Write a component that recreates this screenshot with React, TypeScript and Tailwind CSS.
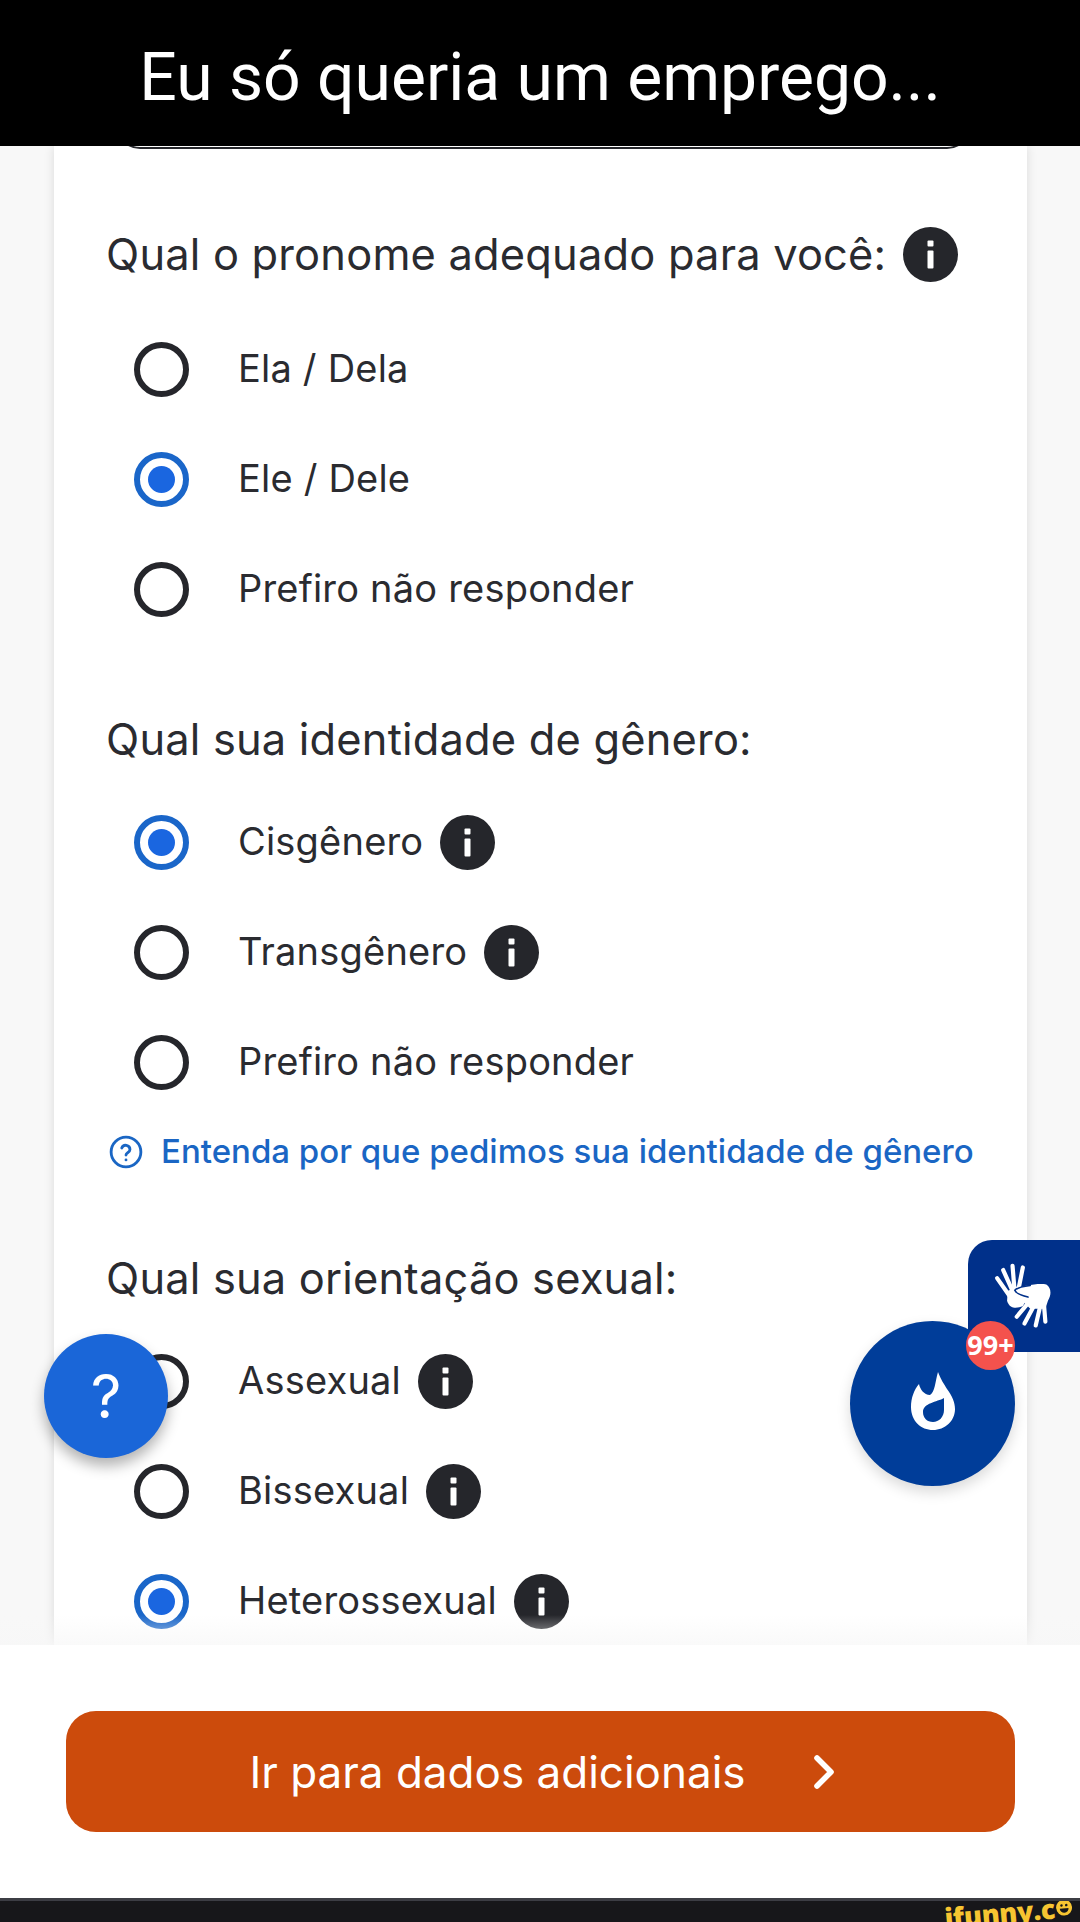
import React from 'react';
import { ChevronRight } from 'lucide-react';

function InfoIcon() {
  return (
    <svg width="55" height="55" viewBox="0 0 55 55" className="shrink-0">
      <circle cx="27.5" cy="27.5" r="27.5" fill="#25262b" />
      <rect x="24.5" y="13.5" width="6" height="6" rx="1" fill="#fff" />
      <rect x="24.5" y="23.5" width="6" height="18" rx="1" fill="#fff" />
    </svg>
  );
}

function SignHands() {
  return (
    <svg width="60" height="66" viewBox="460 125 185 205" className="shrink-0">
      <g stroke="#fff" strokeWidth="13" strokeLinecap="round" fill="none">
        <path d="M472 175 L512 232" />
        <path d="M491 150 L520 215" />
        <path d="M520 137 L526 210" />
        <path d="M552 142 L538 212" />
      </g>
      <path d="M505 215 L535 200 L565 240 L552 262 C530 272 510 268 503 245 Z" fill="#fff" />
      <path d="M530 210 C545 200 600 190 625 195 C640 205 642 225 630 245 L622 270 L575 270 L545 240 C535 228 525 222 530 210 Z" fill="#fff" />
      <g stroke="#fff" strokeWidth="13" strokeLinecap="round" fill="none">
        <path d="M575 245 L533 295" />
        <path d="M590 255 L557 316" />
        <path d="M606 262 L592 322" />
        <path d="M618 262 L622 310" />
      </g>
      <path d="M575 198 C555 200 535 205 527 213 C530 222 545 228 568 234" stroke="#00308a" strokeWidth="5" fill="none" strokeLinecap="round" />
    </svg>
  );
}

function Radio({ checked }: { checked?: boolean }) {
  return (
    <span
      className={`w-[55px] h-[55px] shrink-0 rounded-full border-[6px] flex items-center justify-center ${
        checked ? 'border-[#1a66c9]' : 'border-[#25262b]'
      }`}
    >
      {checked && <span className="w-[27px] h-[27px] rounded-full bg-[#1a66e0]" />}
    </span>
  );
}

function Option({ label, checked, info }: { label: string; checked?: boolean; info?: boolean }) {
  return (
    <div className="h-[110px] flex items-center pl-[80px]">
      <Radio checked={checked} />
      <span className="ml-[49px] pb-[2px] text-[38px] text-[#2a2b30] tracking-[0.2px] whitespace-nowrap">{label}</span>
      {info && (
        <span className="ml-[17px]">
          <InfoIcon />
        </span>
      )}
    </div>
  );
}

function Heading({ children }: { children: React.ReactNode }) {
  return (
    <div className="flex items-center pl-[52px] h-[55px] text-[43.4px] text-[#2a2b30] tracking-[0.2px] whitespace-nowrap">
      {children}
    </div>
  );
}

export default function App() {
  return (
    <div
      className="relative w-[1080px] h-[1922px] overflow-hidden flex flex-col bg-white"
      style={{ fontFamily: 'Inter, sans-serif' }}
    >
      <header className="h-[146px] shrink-0 bg-black flex items-center justify-center">
        <h1 className="text-[66px] text-white pt-[8px]" style={{ fontFamily: 'Roboto, sans-serif' }}>
          Eu só queria um emprego...
        </h1>
      </header>

      <main className="h-[1499px] shrink-0 bg-[#f8f8f8] overflow-hidden pl-[54px] pr-[53px]">
        <section className="h-full bg-white shadow-[0_0_10px_rgba(0,0,0,0.12)] overflow-hidden relative">
          <div className="ml-[62px] mr-[56px] h-[30px] -mt-[27px] border-[2px] border-[#25262b] rounded-b-[24px]" />
          <div className="pt-[78px]">
            <Heading>
              Qual o pronome adequado para você:
              <span className="ml-[17px]">
                <InfoIcon />
              </span>
            </Heading>
            <div className="mt-[32px]">
              <Option label="Ela / Dela" />
              <Option label="Ele / Dele" checked />
              <Option label="Prefiro não responder" />
            </div>
            <div className="mt-[68px]">
              <Heading>Qual sua identidade de gênero:</Heading>
            </div>
            <div className="mt-[20px]">
              <Option label="Cisgênero" checked info />
              <Option label="Transgênero" info />
              <Option label="Prefiro não responder" />
            </div>
            <div className="flex items-center pl-[55px] h-[40px] mt-[15px] text-[33px] font-medium text-[#1a66c4] whitespace-nowrap">
              <svg width="34" height="34" viewBox="0 0 24 24" fill="none" stroke="#1a66c4" strokeWidth="2" strokeLinecap="round" strokeLinejoin="round" className="shrink-0">
                <circle cx="12" cy="12" r="10.5" />
                <path d="M9 9.2a3 3 0 0 1 5.8 1c0 2-2.8 2.4-2.8 4" />
                <path d="M12 17.6h.01" />
              </svg>
              <span className="ml-[18px]">Entenda por que pedimos sua identidade de gênero</span>
            </div>
            <div className="mt-[79px]">
              <Heading>Qual sua orientação sexual:</Heading>
            </div>
            <div className="mt-[20px]">
              <Option label="Assexual" info />
              <Option label="Bissexual" info />
              <Option label="Heterossexual" checked info />
            </div>
          </div>
        </section>
      </main>

      <div className="relative h-[253px] shrink-0 bg-white px-[66px] pt-[66px]">
        <div className="absolute -top-[30px] inset-x-0 h-[30px] bg-gradient-to-b from-transparent to-[#f7f7f7]/70" />
        <button className="w-[949px] h-[121px] pl-[20px] rounded-[30px] bg-[#cc4b0c] text-white flex items-center justify-center text-[44px]">
          <span>Ir para dados adicionais</span>
          <ChevronRight className="ml-[50px] w-[56px] h-[56px]" strokeWidth={2.4} />
        </button>
      </div>

      <footer className="h-[24px] shrink-0 bg-[#17171a] border-t-[3px] border-[#3c3d44] relative overflow-hidden">
        <div
          className="absolute right-[8px] top-[-8px] flex items-center text-[#f7c531] text-[27px] leading-none font-extrabold tracking-[-0.3px] -rotate-[5deg] origin-right"
          style={{ fontFamily: '"Open Sans", sans-serif' }}
        >
          <span>ifunny.c</span>
          <svg width="16" height="16" viewBox="0 0 20 20" className="ml-[1px]">
            <circle cx="10" cy="10" r="10" fill="#f7c531" />
            <circle cx="7" cy="7" r="1.6" fill="#17171a" />
            <circle cx="13" cy="7" r="1.6" fill="#17171a" />
            <path d="M4.5 11h11a5.5 5.5 0 0 1-11 0z" fill="#17171a" />
          </svg>
        </div>
      </footer>

      {/* floating buttons over the form */}
      <button className="absolute left-[44px] top-[1334px] w-[124px] h-[124px] rounded-full bg-[#1a66d8] text-white text-[60px] flex items-center justify-center shadow-[0_8px_14px_rgba(0,0,0,0.3)]">
        ?
      </button>

      <div className="absolute right-0 top-[1240px] w-[112px] h-[112px] bg-[#00308a] rounded-tl-[24px] flex items-center justify-center">
        <span className="mr-[2px] mb-[2px]">
          <SignHands />
        </span>
      </div>

      <div className="absolute left-[850px] top-[1321px] w-[165px] h-[165px] rounded-full bg-[#003d99] flex items-center justify-center shadow-[0_6px_14px_rgba(0,0,0,0.15)]">
        <svg width="44" height="58" viewBox="0 0 44 58" className="mb-[6px]">
          <path
            fillRule="evenodd"
            fill="#fff"
            d="M27 0C30 8 33 12 36 17C41 24 44 30 44 37C44 49 34 58 22 58C10 58 0 49 0 35C0 26 3 18 8 12C9 17 13 23 19 23C24 20 24 10 27 0ZM33 26C26 30 12 31 12 40C12 46 16 50 22 50C28 50 33 45 33 38C33 34 33 30 33 26Z"
          />
        </svg>
      </div>
      <div
        className="absolute left-[966px] top-[1321px] w-[49px] h-[49px] rounded-full bg-[#f4524d] text-white text-[27px] font-bold flex items-center justify-center"
        style={{ fontFamily: '"Open Sans", sans-serif' }}
      >
        99+
      </div>
    </div>
  );
}
